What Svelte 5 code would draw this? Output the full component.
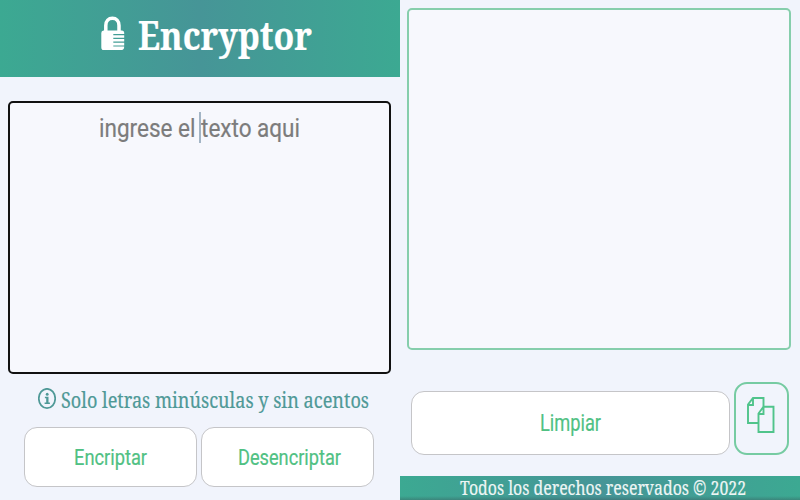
<script>
  let focused = $state(true);
</script>

{#snippet label(text, width, height, size, baseline)}
  <svg class="label" {width} {height} role="img" aria-label={text}>
    <text x="0" y={baseline} font-size={size} textLength={width} lengthAdjust="spacingAndGlyphs">{text}</text>
  </svg>
{/snippet}

<div class="app">
  <section class="left">
    <header>
      <svg class="lock" width="24" height="36" viewBox="0 0 24 36">
        <path d="M4.8 16V9.5C4.8 4.8 7.6 2.2 11.4 2.200S18 4.8 18 9.5V16" fill="none" stroke="#fff" stroke-width="3.5" />
        <path d="M2.5 14.5h18.2q2.5 0 2.5 2.5v1H12.3v1.300h10.9v2.500H12.3v1.200h10.9v2.600H12.3v1.200h10.9v2.600H12.3v1.200h10.9q0 3.400-2.500 3.400H2.500Q.3 34 .3 31.200V17Q.3 14.500 2.500 14.500Z" fill="#fff" />
      </svg>
      <h1>{@render label('Encryptor', 174, 50, 39.5, 37)}</h1>
    </header>
    <div class="entry" class:focused>
      {@render label('ingrese el texto aqui', 201, 36, 26, 26.5)}
      <i class="caret"></i>
    </div>
    <p class="note">
      <svg class="info" width="18" height="22" viewBox="0 0 18 22">
        <ellipse cx="9" cy="10.500" rx="8.200" ry="9.700" fill="none" stroke="currentColor" stroke-width="1.700" />
        <ellipse cx="9.200" cy="6.200" rx="1.400" ry="1.500" fill="currentColor" />
        <path d="M6.900 8.800h3.600v5.800h1.400v1.400H6.600v-1.400h1.600v-4.400H6.900Z" fill="currentColor" />
      </svg>
      {@render label('Solo letras minúsculas y sin acentos', 308, 28, 21, 20)}
    </p>
    <div class="actions">
      <button>{@render label('Encriptar', 73, 28, 21.5, 21.5)}</button>
      <button class="decrypt">{@render label('Desencriptar', 103, 28, 21.5, 21.5)}</button>
    </div>
  </section>

  <section class="right">
    <div class="result"></div>
    <div class="tools">
      <button class="clear">{@render label('Limpiar', 61, 30, 23.5, 22.500)}</button>
      <button class="copy" aria-label="Copiar">
        <svg width="28" height="36" viewBox="0 0 28 36" fill="none" stroke="#50c48b" stroke-width="1.900">
          <path d="M11 26H1V7.500L6 1h10.500v8.500M1 8h5V1" />
          <path d="M11.500 16.500L16.500 9.700H26.500V35H11.500ZM11.500 17H16.500V9.700" />
        </svg>
      </button>
    </div>
    <footer>{@render label('Todos los derechos reservados © 2022', 286, 24, 20.8, 18.500)}</footer>
  </section>
</div>

<style>
  :global(body) { margin: 0; }
  .app {
    width: 800px;
    height: 500px;
    display: grid;
    grid-template-columns: 400px 400px;
    background: #f1f4fc;
    font-family: "Noto Serif", "Droid Serif", "DejaVu Serif Condensed", "DejaVu Serif", serif;
  }
  section { display: flex; flex-direction: column; height: 500px; min-width: 0; }
  .label { display: block; overflow: visible; flex: none; }
  .label text { fill: currentColor; stroke: currentColor; stroke-width: 0.2px; }
  header {
    height: 77px;
    flex: none;
    box-sizing: border-box;
    display: flex;
    align-items: flex-start;
    padding: 13px 0 0 101px;
    gap: 13px;
    background: linear-gradient(90deg, #3ca992, #469597 50%, #3ca992);
    color: #fff;
  }
  .lock { margin-top: 3px; }
  .lock, .info { display: block; flex: none; }
  h1 { margin: 0; font-size: 38px; font-weight: 700; }
  .entry, .result { box-sizing: border-box; background: #f7f8fd; border-radius: 5px; flex: none; }
  .entry {
    width: 383px;
    height: 273px;
    margin: 24px 0 0 8px;
    border: 1px solid #aaa;
    padding: 7px 0 0 89px;
    position: relative;
    color: #7c7c7c;
    font-family: Roboto, sans-serif;
  }
  .focused { border: 2px solid #111; }
  .caret {
    position: absolute;
    left: 189px;
    top: 9px;
    width: 2px;
    height: 31px;
    background: #a3b5c5;
  }
  .note {
    margin: 14px 0 0 38px;
    display: flex;
    gap: 5px;
    height: 28px;
    color: #4f9997;
  }
  .actions { display: flex; gap: 4px; margin: 11px 0 0 24px; }
  button {
    box-sizing: border-box;
    width: 173px;
    height: 60px;
    padding: 0;
    border: 1.5px solid #c5c5c8;
    border-radius: 13px;
    background: #fff;
    color: #50c183;
    font-family: Roboto, sans-serif;
    display: flex;
    align-items: center;
    justify-content: center;
  }
  .decrypt { padding-left: 4px; }
  .result { width: 384px; height: 342px; margin: 8px 0 0 7px; border: 2px solid #86ceac; }
  .tools { display: flex; align-items: flex-end; gap: 4px; margin: 32px 0 0 11px; height: 73px; }
  .clear { width: 319px; height: 64px; }
  .copy { width: 55px; height: 73px; background: transparent; border: 2px solid #76cba2; }
  .copy svg { display: block; margin: -7px 0 0 -2px; }
  footer {
    margin-top: 21px;
    height: 24px;
    padding-left: 60px;
    color: #eef6f5;
    background:
      linear-gradient(0deg, #37555866, transparent 4px),
      linear-gradient(90deg, #3ca992, #469597 50%, #3ca992);
  }
</style>
